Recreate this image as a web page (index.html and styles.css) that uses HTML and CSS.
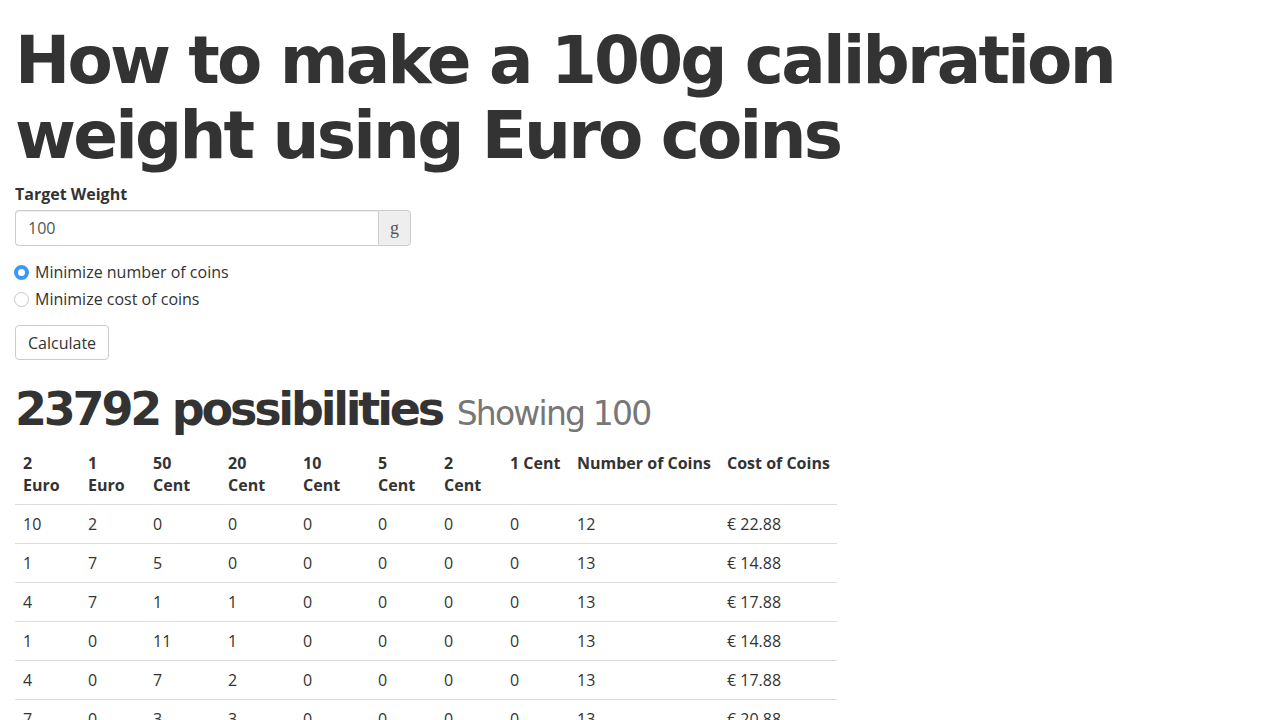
FILE: index.html
```html
<!DOCTYPE html>
<html lang="en">
<head>
<meta charset="utf-8">
<title>How to make a 100g calibration weight using Euro coins</title>
<link rel="stylesheet" href="styles.css">
</head>
<body>
<div class="container">
  <h1 class="title">How to make a 100g calibration weight using Euro coins</h1>
  <form class="form">
    <label class="field-label" for="weight">Target Weight</label>
    <div class="input-group">
      <input class="input" id="weight" type="text" value="100">
      <span class="addon">g</span>
    </div>
    <div class="radios">
      <label class="radio"><input type="radio" name="mode" checked><span>Minimize number of coins</span></label>
      <label class="radio"><input type="radio" name="mode"><span>Minimize cost of coins</span></label>
    </div>
    <button class="btn" type="button">Calculate</button>
  </form>
  <h2 class="results">23792 possibilities <small class="sub">Showing 100</small></h2>
  <table class="table">
    <colgroup>
      <col class="c65"><col class="c65"><col class="c75"><col class="c75"><col class="c75"><col class="c66"><col class="c66"><col class="c67"><col class="c150"><col class="c118">
    </colgroup>
    <thead>
      <tr><th>2<br>Euro</th><th>1<br>Euro</th><th>50<br>Cent</th><th>20<br>Cent</th><th>10<br>Cent</th><th>5<br>Cent</th><th>2<br>Cent</th><th>1 Cent</th><th>Number of Coins</th><th>Cost of Coins</th></tr>
    </thead>
    <tbody>
      <tr><td>10</td><td>2</td><td>0</td><td>0</td><td>0</td><td>0</td><td>0</td><td>0</td><td>12</td><td>€ 22.88</td></tr>
      <tr><td>1</td><td>7</td><td>5</td><td>0</td><td>0</td><td>0</td><td>0</td><td>0</td><td>13</td><td>€ 14.88</td></tr>
      <tr><td>4</td><td>7</td><td>1</td><td>1</td><td>0</td><td>0</td><td>0</td><td>0</td><td>13</td><td>€ 17.88</td></tr>
      <tr><td>1</td><td>0</td><td>11</td><td>1</td><td>0</td><td>0</td><td>0</td><td>0</td><td>13</td><td>€ 14.88</td></tr>
      <tr><td>4</td><td>0</td><td>7</td><td>2</td><td>0</td><td>0</td><td>0</td><td>0</td><td>13</td><td>€ 17.88</td></tr>
      <tr><td>7</td><td>0</td><td>3</td><td>3</td><td>0</td><td>0</td><td>0</td><td>0</td><td>13</td><td>€ 20.88</td></tr>
      <tr><td>10</td><td>0</td><td>0</td><td>4</td><td>0</td><td>0</td><td>0</td><td>0</td><td>14</td><td>€ 23.88</td></tr>
    </tbody>
  </table>
</div>
</body>
</html>
```
FILE: styles.css
```css
html, body {
  margin: 0;
  padding: 0;
  background: #fff;
}
body {
  font-family: "Open Sans", "Liberation Sans", sans-serif;
  font-size: 16px;
  line-height: 22px;
  color: #333;
}
.container {
  padding: 0 15px;
}
.title {
  font-family: "DejaVu Sans", sans-serif;
  font-weight: bold;
  font-size: 66px;
  line-height: 75px;
  letter-spacing: -2.8px;
  margin: 23px 0 10px 0;
  color: #333;
  max-width: 1150px;
}
.form {
  display: flex;
  flex-direction: column;
  align-items: flex-start;
}
.field-label {
  font-weight: bold;
  margin-bottom: 5px;
}
.input-group {
  display: flex;
  width: 396px;
  height: 36px;
  box-sizing: border-box;
}
.input {
  flex: 1;
  min-width: 0;
  box-sizing: border-box;
  height: 36px;
  border: 1px solid #ccc;
  border-right: 0;
  border-radius: 4px 0 0 4px;
  padding: 0 12px;
  font-family: "Open Sans", sans-serif;
  font-size: 16px;
  color: #555;
  outline: none;
  box-shadow: inset 0 1px 1px rgba(0,0,0,0.075);
}
.addon {
  width: 33px;
  box-sizing: border-box;
  display: flex;
  align-items: center;
  justify-content: center;
  background: #eee;
  border: 1px solid #ccc;
  border-radius: 0 4px 4px 0;
  font-family: "Liberation Serif", serif;
  font-size: 18px;
  color: #555;
}
.radios {
  display: flex;
  flex-direction: column;
  gap: 5px;
  margin-top: 15px;
}
.radio {
  display: flex;
  align-items: center;
  gap: 6px;
  height: 22px;
}
.radio input {
  appearance: none;
  -webkit-appearance: none;
  margin: 0 0 0 -1px;
  width: 15px;
  height: 15px;
  border-radius: 50%;
  border: 1px solid #c8c8c8;
  background: #fff;
  box-sizing: border-box;
}
.radio input:checked {
  border: 4.5px solid #3d97f7;
  background: #fff;
}
.btn {
  margin-top: 15px;
  height: 35px;
  padding: 0 12px;
  background: #fff;
  border: 1px solid #ccc;
  border-radius: 4px;
  font-family: "Open Sans", sans-serif;
  font-size: 16px;
  color: #333;
}
.results {
  font-family: "DejaVu Sans", sans-serif;
  font-weight: bold;
  font-size: 46px;
  line-height: 51px;
  letter-spacing: -3.2px;
  margin: 24px 0 5px 0;
  color: #333;
}
.sub {
  font-weight: normal;
  font-size: 33px;
  letter-spacing: -1.8px;
  color: #777;
  margin-left: 2px;
}
.table {
  border-collapse: collapse;
  table-layout: fixed;
  width: 822px;
}
.c65 { width: 65px; }
.c66 { width: 66px; }
.c67 { width: 67px; }
.c75 { width: 75px; }
.c150 { width: 150px; }
.c118 { width: 118px; }
.table th {
  text-align: left;
  vertical-align: top;
  padding: 8px;
  border-bottom: 1px solid #ddd;
  white-space: nowrap;
  font-weight: bold;
}
.table td {
  padding: 8px;
  border-top: 1px solid #ddd;
  white-space: nowrap;
}
```
